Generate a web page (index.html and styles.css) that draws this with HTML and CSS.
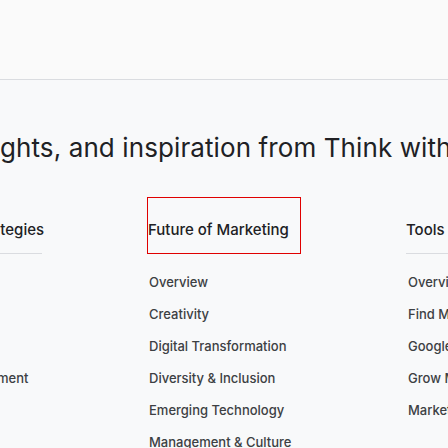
FILE: index.html
```html
<!DOCTYPE html>
<html lang="en">
<head>
<meta charset="utf-8">
<title>Think with Google</title>
<link rel="stylesheet" href="styles.css">
</head>
<body>
<header class="topbar"></header>
<main class="content">
  <h1 class="intro">ghts, and inspiration from Think with Google</h1>
  <nav class="menu">
    <div class="col col-first">
      <div class="col-head">Marketing Strategies</div>
      <ul class="links">
        <li>Overview</li>
        <li>Search</li>
        <li>Video</li>
        <li>Data and Measurement</li>
        <li>Mobile</li>
        <li>Automation</li>
      </ul>
    </div>
    <div class="col">
      <div class="col-head focused">Future of Marketing</div>
      <ul class="links">
        <li>Overview</li>
        <li>Creativity</li>
        <li>Digital Transformation</li>
        <li>Diversity &amp; Inclusion</li>
        <li>Emerging Technology</li>
        <li>Management &amp; Culture</li>
      </ul>
    </div>
    <div class="col col-last">
      <div class="col-head">Tools</div>
      <ul class="links">
        <li>Overview</li>
        <li>Find My Audience</li>
        <li>Google Trends</li>
        <li>Grow My Store</li>
        <li>Market Finder</li>
      </ul>
    </div>
  </nav>
</main>
</body>
</html>
```

FILE: styles.css
```css
html, body {
  margin: 0;
  padding: 0;
}
body {
  width: 448px;
  height: 448px;
  overflow: hidden;
  background: #f8f9fa;
  font-family: Inter, "Open Sans", sans-serif;
  color: #202124;
}
.topbar {
  height: 79px;
  background: #fafafa;
  border-bottom: 1px solid #dadce0;
}
.content {
  overflow: hidden;
}
.intro {
  margin: 0;
  padding-top: 51px;
  font-size: 26px;
  line-height: 34px;
  font-weight: 400;
  white-space: nowrap;
  letter-spacing: 0.1px;
  color: #202124;
}
.menu {
  display: flex;
  gap: 105px;
  margin-left: -112px;
  margin-top: 32px;
}
.col {
  width: 154px;
  flex: none;
}
.col-last {
  width: 200px;
}
.col-head {
  box-sizing: border-box;
  height: 57px;
  padding-top: 23px;
  font-size: 15px;
  line-height: 20px;
  font-weight: 500;
  white-space: nowrap;
  border-bottom: 1px solid #dadce0;
}
.col-first .col-head {
  padding-left: 7px;
}
.col-head.focused {
  border: 1px solid #e00000;
  height: 57px;
  padding-top: 22px;
}
.links {
  list-style: none;
  margin: 0;
  padding: 12px 0 0 2px;
}
.col-first .links {
  padding-left: 0;
  margin-left: -4px;
}
.links li {
  font-size: 13px;
  line-height: 32px;
  font-weight: 500;
  color: #3c4043;
  white-space: nowrap;
}
```
